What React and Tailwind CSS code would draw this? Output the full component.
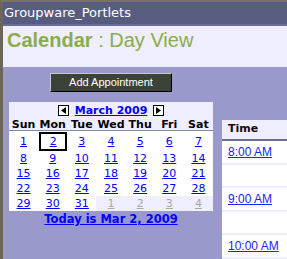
import React from 'react';

const weeks = [
  [1, 2, 3, 4, 5, 6, 7],
  [8, 9, 10, 11, 12, 13, 14],
  [15, 16, 17, 18, 19, 20, 21],
  [22, 23, 24, 25, 26, 27, 28],
  [29, 30, 31, 1, 2, 3, 4],
];

const dayNames = ['Sun', 'Mon', 'Tue', 'Wed', 'Thu', 'Fri', 'Sat'];

const slots = ['8:00 AM', '', '9:00 AM', '', '10:00 AM'];

const ArrowBox = ({ dir }) => (
  <span className="w-[11px] h-[11px] border border-black bg-white flex items-center justify-center">
    <svg width="5" height="7" viewBox="0 0 5 7">
      {dir === 'left' ? <path d="M5 0 L0 3.5 L5 7 Z" fill="#000" /> : <path d="M0 0 L5 3.5 L0 7 Z" fill="#000" />}
    </svg>
  </span>
);

const MiniCalendar = () => (
  <div className="w-[204px] bg-white font-['DejaVu_Sans',sans-serif] text-[11px]">
    <div className="bg-[#eeeeff]">
      <div className="h-[16px] flex items-center justify-center gap-[6px]">
        <ArrowBox dir="left" />
        <a href="#" className="font-bold text-[#0000ff] underline leading-[13px]">
          March 2009
        </a>
        <ArrowBox dir="right" />
      </div>
      <div className="grid grid-cols-7 h-[13px] leading-[13px] font-bold text-black text-center border-b border-[#8888a8]">
        {dayNames.map((d) => (
          <div key={d}>{d}</div>
        ))}
      </div>
    </div>
    {weeks.map((week, wi) => (
      <div key={wi} className={`grid grid-cols-7 text-center ${wi === 0 ? 'h-[20px]' : 'h-[15px]'}`}>
        {week.map((n, di) => {
          const next = wi === 4 && di > 2;
          const selected = wi === 0 && n === 2;
          return (
            <div
              key={di}
              className={`flex items-center justify-center ${next ? 'bg-[#eeeeff]' : ''}`}
            >
              <span
                className={`flex items-center justify-center w-full ${
                  selected ? 'h-[19px] border-2 border-black ml-[1px]' : 'h-full'
                }`}
              >
                <a
                  href="#"
                  className={`underline leading-[13px] ${next ? 'text-[#a8a8a8]' : 'text-[#0000ff]'}`}
                >
                  {n}
                </a>
              </span>
            </div>
          );
        })}
      </div>
    ))}
  </div>
);

export default function App() {
  return (
    <div className="w-[287px] h-[259px] overflow-hidden flex flex-col bg-[#9999cc] border-t-2 border-t-[#7c7262] border-l-[3px] border-l-[#6b6658]">
      <div className="h-[22px] shrink-0 bg-[#585d80] text-white pl-[1px] text-[13px] leading-[22px] font-['DejaVu_Sans',sans-serif]">
        Groupware_Portlets
      </div>
      <div className="h-[2px] shrink-0 bg-[#6b6a9c]" />
      <div className="h-[41px] shrink-0 bg-[#eeeeff] pl-[4px] pt-[3px] text-[20px] leading-[23px] text-[#8bab4c] font-['Liberation_Sans',Arial,sans-serif] whitespace-nowrap">
        <span className="font-bold">Calendar</span> : Day View
      </div>
      <div className="flex-1 flex">
        <div className="w-[210px] shrink-0 pl-[6px]">
          <div className="w-[204px] flex justify-center mt-[6px]">
            <button className="w-[122px] h-[19px] bg-[#3d4239] text-white text-[11px] font-['Liberation_Sans',Arial,sans-serif] border border-t-[#c8c8c8] border-l-[#c8c8c8] border-r-black border-b-black">
              Add Appointment
            </button>
          </div>
          <div className="mt-[10px]">
            <MiniCalendar />
          </div>
          <div className="w-[204px] text-center leading-[13px]">
            <a href="#" className="font-bold underline text-[#0000ff] text-[11.5px] font-['DejaVu_Sans',sans-serif]">
              Today is Mar 2, 2009
            </a>
          </div>
        </div>
        <div className="ml-[9px] mt-[53px] w-[120px] shrink-0 bg-white">
          <div className="h-[21px] bg-[#eeeeff] border-b-2 border-[#6b6b8f] pl-[6px] flex items-center font-bold text-[11px] text-[#200808] font-['DejaVu_Sans',sans-serif]">
            Time
          </div>
          {slots.map((s, i) => (
            <div
              key={i}
              className={`${i % 2 === 0 ? 'h-[24px]' : 'h-[23px]'} border-b-2 border-[#eeeeff] pl-[6px] flex items-center`}
            >
              {s && (
                <a href="#" className="underline text-[#2222ff] text-[12px] font-['Liberation_Sans',Arial,sans-serif]">
                  {s}
                </a>
              )}
            </div>
          ))}
        </div>
      </div>
    </div>
  );
}
